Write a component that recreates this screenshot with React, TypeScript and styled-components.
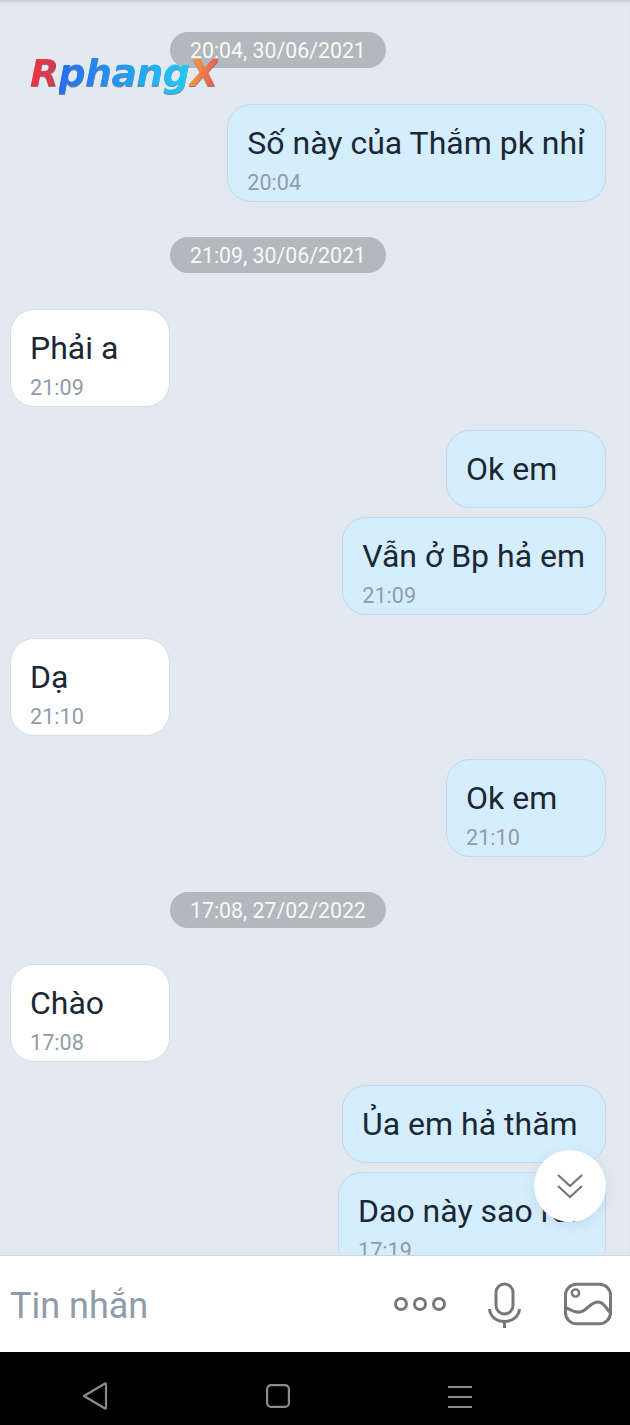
import React from "react";
import styled, { createGlobalStyle } from "styled-components";

const GlobalStyle = createGlobalStyle`
  html, body {
    margin: 0;
    padding: 0;
    background: #e2e9f1;
  }
`;

const Screen = styled.div`
  position: relative;
  width: 630px;
  height: 1425px;
  display: flex;
  flex-direction: column;
  overflow: hidden;
  font-family: Roboto, "Noto Sans", sans-serif;
  background: #e2e9f1;
`;

const MessageList = styled.div`
  flex: 1;
  min-height: 0;
  display: flex;
  flex-direction: column;
  align-items: flex-start;
  padding: 32px 24px 0 10px;
  overflow: hidden;
  box-shadow: inset 0 4px 3px -2px rgba(120, 130, 145, 0.3);
`;

const DatePill = styled.div<{ $top: number }>`
  flex-shrink: 0;
  margin-top: ${(p) => p.$top}px;
  margin-left: 160px;
  height: 36px;
  padding: 0 20px;
  border-radius: 18px;
  background: #b3b8bd;
  color: #f7f8f9;
  font-size: 21.3px;
  line-height: 37px;
  white-space: nowrap;
`;

const Bubble = styled.div<{ $mine?: boolean; $top: number; $hasTime: boolean; $minWidth: number }>`
  flex-shrink: 0;
  box-sizing: border-box;
  min-width: ${(p) => p.$minWidth}px;
  margin-top: ${(p) => p.$top}px;
  align-self: ${(p) => (p.$mine ? "flex-end" : "flex-start")};
  padding: 18px 20px ${(p) => (p.$hasTime ? 5 : 18)}px 19px;
  border: 1px solid ${(p) => (p.$mine ? "#c4d8e7" : "#d5dde6")};
  border-radius: 24px;
  background: ${(p) => (p.$mine ? "#d4eeff" : "#ffffff")};
`;

const BubbleText = styled.div`
  color: #1b2733;
  font-size: 32px;
  line-height: 40px;
  white-space: nowrap;
`;

const BubbleTime = styled.div`
  margin-top: 7px;
  color: #8f9ca9;
  font-size: 21.6px;
  line-height: 26px;
`;

const ScrollButton = styled.div`
  position: absolute;
  left: 534px;
  top: 1150px;
  width: 72px;
  height: 72px;
  display: flex;
  align-items: center;
  justify-content: center;
  border-radius: 50%;
  background: #ffffff;
  box-shadow: 0 3px 12px rgba(90, 105, 125, 0.16);
`;

const Watermark = styled.div`
  position: absolute;
  left: 30px;
  top: 50px;
  font-family: "DejaVu Sans", Verdana, sans-serif;
  font-size: 38px;
  font-weight: 700;
  font-style: italic;
  line-height: 46px;
  letter-spacing: -0.7px;
  white-space: nowrap;
  filter: drop-shadow(0 1px 0 rgba(60, 60, 70, 0.6));
`;

const WatermarkPart = styled.span<{ $from: string; $to: string }>`
  background: linear-gradient(100deg, ${(p) => p.$from}, ${(p) => p.$to});
  -webkit-background-clip: text;
  background-clip: text;
  color: transparent;
`;

const InputBar = styled.div`
  flex-shrink: 0;
  box-sizing: border-box;
  height: 97px;
  display: flex;
  align-items: center;
  gap: 35px;
  padding: 0 14px 0 10px;
  border-top: 1px solid #cfd4d9;
  background: #ffffff;
`;

const Placeholder = styled.div`
  margin-right: auto;
  padding-top: 4px;
  color: #8f9ca9;
  font-size: 36px;
  line-height: 44px;
`;

const NavBar = styled.div`
  flex-shrink: 0;
  box-sizing: border-box;
  height: 73px;
  display: flex;
  align-items: center;
  justify-content: space-between;
  padding: 15px 158px 0 82px;
  background: #000000;
`;

type Item =
  | { kind: "date"; label: string; top: number }
  | { kind: "msg"; text: string; time?: string; mine?: boolean; top: number; minWidth?: number };

const items: Item[] = [
  { kind: "date", label: "20:04, 30/06/2021", top: 0 },
  { kind: "msg", text: "Số này của Thắm pk nhỉ", time: "20:04", mine: true, top: 36 },
  { kind: "date", label: "21:09, 30/06/2021", top: 35 },
  { kind: "msg", text: "Phải a", time: "21:09", top: 36 },
  { kind: "msg", text: "Ok em", mine: true, top: 23 },
  { kind: "msg", text: "Vẫn ở Bp hả em", time: "21:09", mine: true, top: 9 },
  { kind: "msg", text: "Dạ", time: "21:10", top: 23 },
  { kind: "msg", text: "Ok em", time: "21:10", mine: true, top: 23 },
  { kind: "date", label: "17:08, 27/02/2022", top: 35 },
  { kind: "msg", text: "Chào", time: "17:08", top: 36 },
  { kind: "msg", text: "Ủa em hả thăm", mine: true, top: 23, minWidth: 264 },
  { kind: "msg", text: "Dao này sao rồi", time: "17:19", mine: true, top: 9, minWidth: 268 },
];

const iconGrey = "#777777";
const navGrey = "#8c8c8c";

const App: React.FC = () => {
  return (
    <>
      <GlobalStyle />
      <Screen>
        <MessageList>
          {items.map((item, i) =>
            item.kind === "date" ? (
              <DatePill key={i} $top={item.top}>
                {item.label}
              </DatePill>
            ) : (
              <Bubble
                key={i}
                $mine={item.mine}
                $top={item.top}
                $hasTime={!!item.time}
                $minWidth={item.minWidth ?? 160}
              >
                <BubbleText>{item.text}</BubbleText>
                {item.time && <BubbleTime>{item.time}</BubbleTime>}
              </Bubble>
            )
          )}
        </MessageList>

        <Watermark>
          <WatermarkPart $from="#f6333b" $to="#c2405a">R</WatermarkPart>
          <WatermarkPart $from="#2a68ee" $to="#20cdf6">phang</WatermarkPart>
          <WatermarkPart $from="#f5a63c" $to="#e8505a">X</WatermarkPart>
        </Watermark>

        <ScrollButton>
          <svg width="28" height="28" viewBox="0 0 28 28" fill="none" stroke="#777777" strokeWidth="2.2">
            <path d="M2 3 L14 14 L26 3" />
            <path d="M2 14 L14 25 L26 14" />
          </svg>
        </ScrollButton>

        <InputBar>
          <Placeholder>Tin nhắn</Placeholder>
          <svg width="60" height="20" viewBox="0 0 60 20" fill="none" stroke={iconGrey} strokeWidth="3">
            <circle cx="11" cy="10" r="5.5" />
            <circle cx="30" cy="10" r="5.5" />
            <circle cx="49" cy="10" r="5.5" />
          </svg>
          <svg width="40" height="50" viewBox="0 0 40 50" fill="none" stroke={iconGrey} strokeWidth="3">
            <rect x="11" y="5" width="17" height="30" rx="8.5" />
            <path d="M4.5 30 C5 37 11 42.5 19.5 42.5 C28 42.5 34 37 34.5 30" />
            <path d="M19.5 42.5 V49" />
          </svg>
          <svg width="56" height="48" viewBox="0 0 56 48" fill="none" stroke={iconGrey} strokeWidth="3">
            <rect x="5.5" y="4.2" width="45" height="39.5" rx="11" />
            <circle cx="15.5" cy="13" r="3.6" strokeWidth="2.4" />
            <path d="M6.5 28 C10 29 13 33 20 32 C27 31 30 22 38 22 C44 22 47 29 49.5 32" />
          </svg>
        </InputBar>

        <NavBar>
          <svg width="26" height="30" viewBox="0 0 26 30" fill="none" stroke={navGrey} strokeWidth="2.2" strokeLinejoin="round">
            <path d="M2 15 L23 2.5 Q24 2 24 3.5 V26.5 Q24 28 23 27.5 Z" />
          </svg>
          <svg width="24" height="24" viewBox="0 0 24 24" fill="none" stroke={navGrey} strokeWidth="2.2">
            <rect x="1.1" y="1.1" width="21.8" height="21.8" rx="4" />
          </svg>
          <svg width="24" height="24" viewBox="0 0 24 24" fill="none" stroke={navGrey} strokeWidth="2">
            <path d="M0 3 H24" />
            <path d="M0 13 H24" />
            <path d="M0 23 H24" />
          </svg>
        </NavBar>
      </Screen>
    </>
  );
};

export default App;
